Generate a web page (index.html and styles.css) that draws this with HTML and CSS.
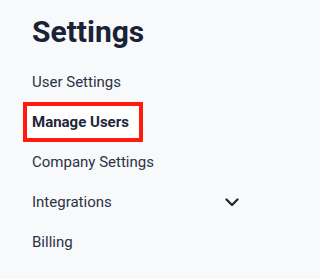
FILE: index.html
```html
<!DOCTYPE html>
<html>
<head>
<meta charset="utf-8">
<link rel="stylesheet" href="styles.css">
</head>
<body>
<div class="panel">
  <h1 class="title">Settings</h1>
  <ul class="menu">
    <li class="item">User Settings</li>
    <li class="item active">Manage Users</li>
    <li class="item">Company Settings</li>
    <li class="item expandable">
      <span>Integrations</span>
      <svg class="chev" width="14" height="9" viewBox="0 0 14 9"><path d="M1.5 1.5 L7 7 L12.5 1.5" fill="none" stroke="#1c2436" stroke-width="2.2" stroke-linecap="round" stroke-linejoin="round"/></svg>
    </li>
    <li class="item">Billing</li>
  </ul>
</div>
</body>
</html>
```
FILE: styles.css
```css
html, body {
  margin: 0;
  padding: 0;
  background: #f8f9fb;
}
body {
  font-family: Roboto, "Liberation Sans", sans-serif;
  width: 253px;
  height: 279px;
  overflow: hidden;
}
.panel {
  padding-top: 14px;
}
.title {
  margin: 0 0 12px 32px;
  font-size: 30px;
  line-height: 36px;
  font-weight: 700;
  color: #1a2235;
}
.menu {
  list-style: none;
  margin: 0;
  padding: 0 15px 0 23px;
}
.item {
  height: 40px;
  line-height: 40px;
  box-sizing: border-box;
  padding-left: 9px;
  font-size: 15px;
  color: #2b3244;
  display: flex;
  align-items: center;
}
.item.active {
  width: 120px;
  border: 4px solid #ff1a0d;
  background: #ffffff;
  padding-left: 5px;
  line-height: 32px;
  font-weight: 700;
  color: #1e2638;
}
.expandable {
  justify-content: space-between;
}
.chev {
  display: block;
  margin-right: -1px;
}
```
